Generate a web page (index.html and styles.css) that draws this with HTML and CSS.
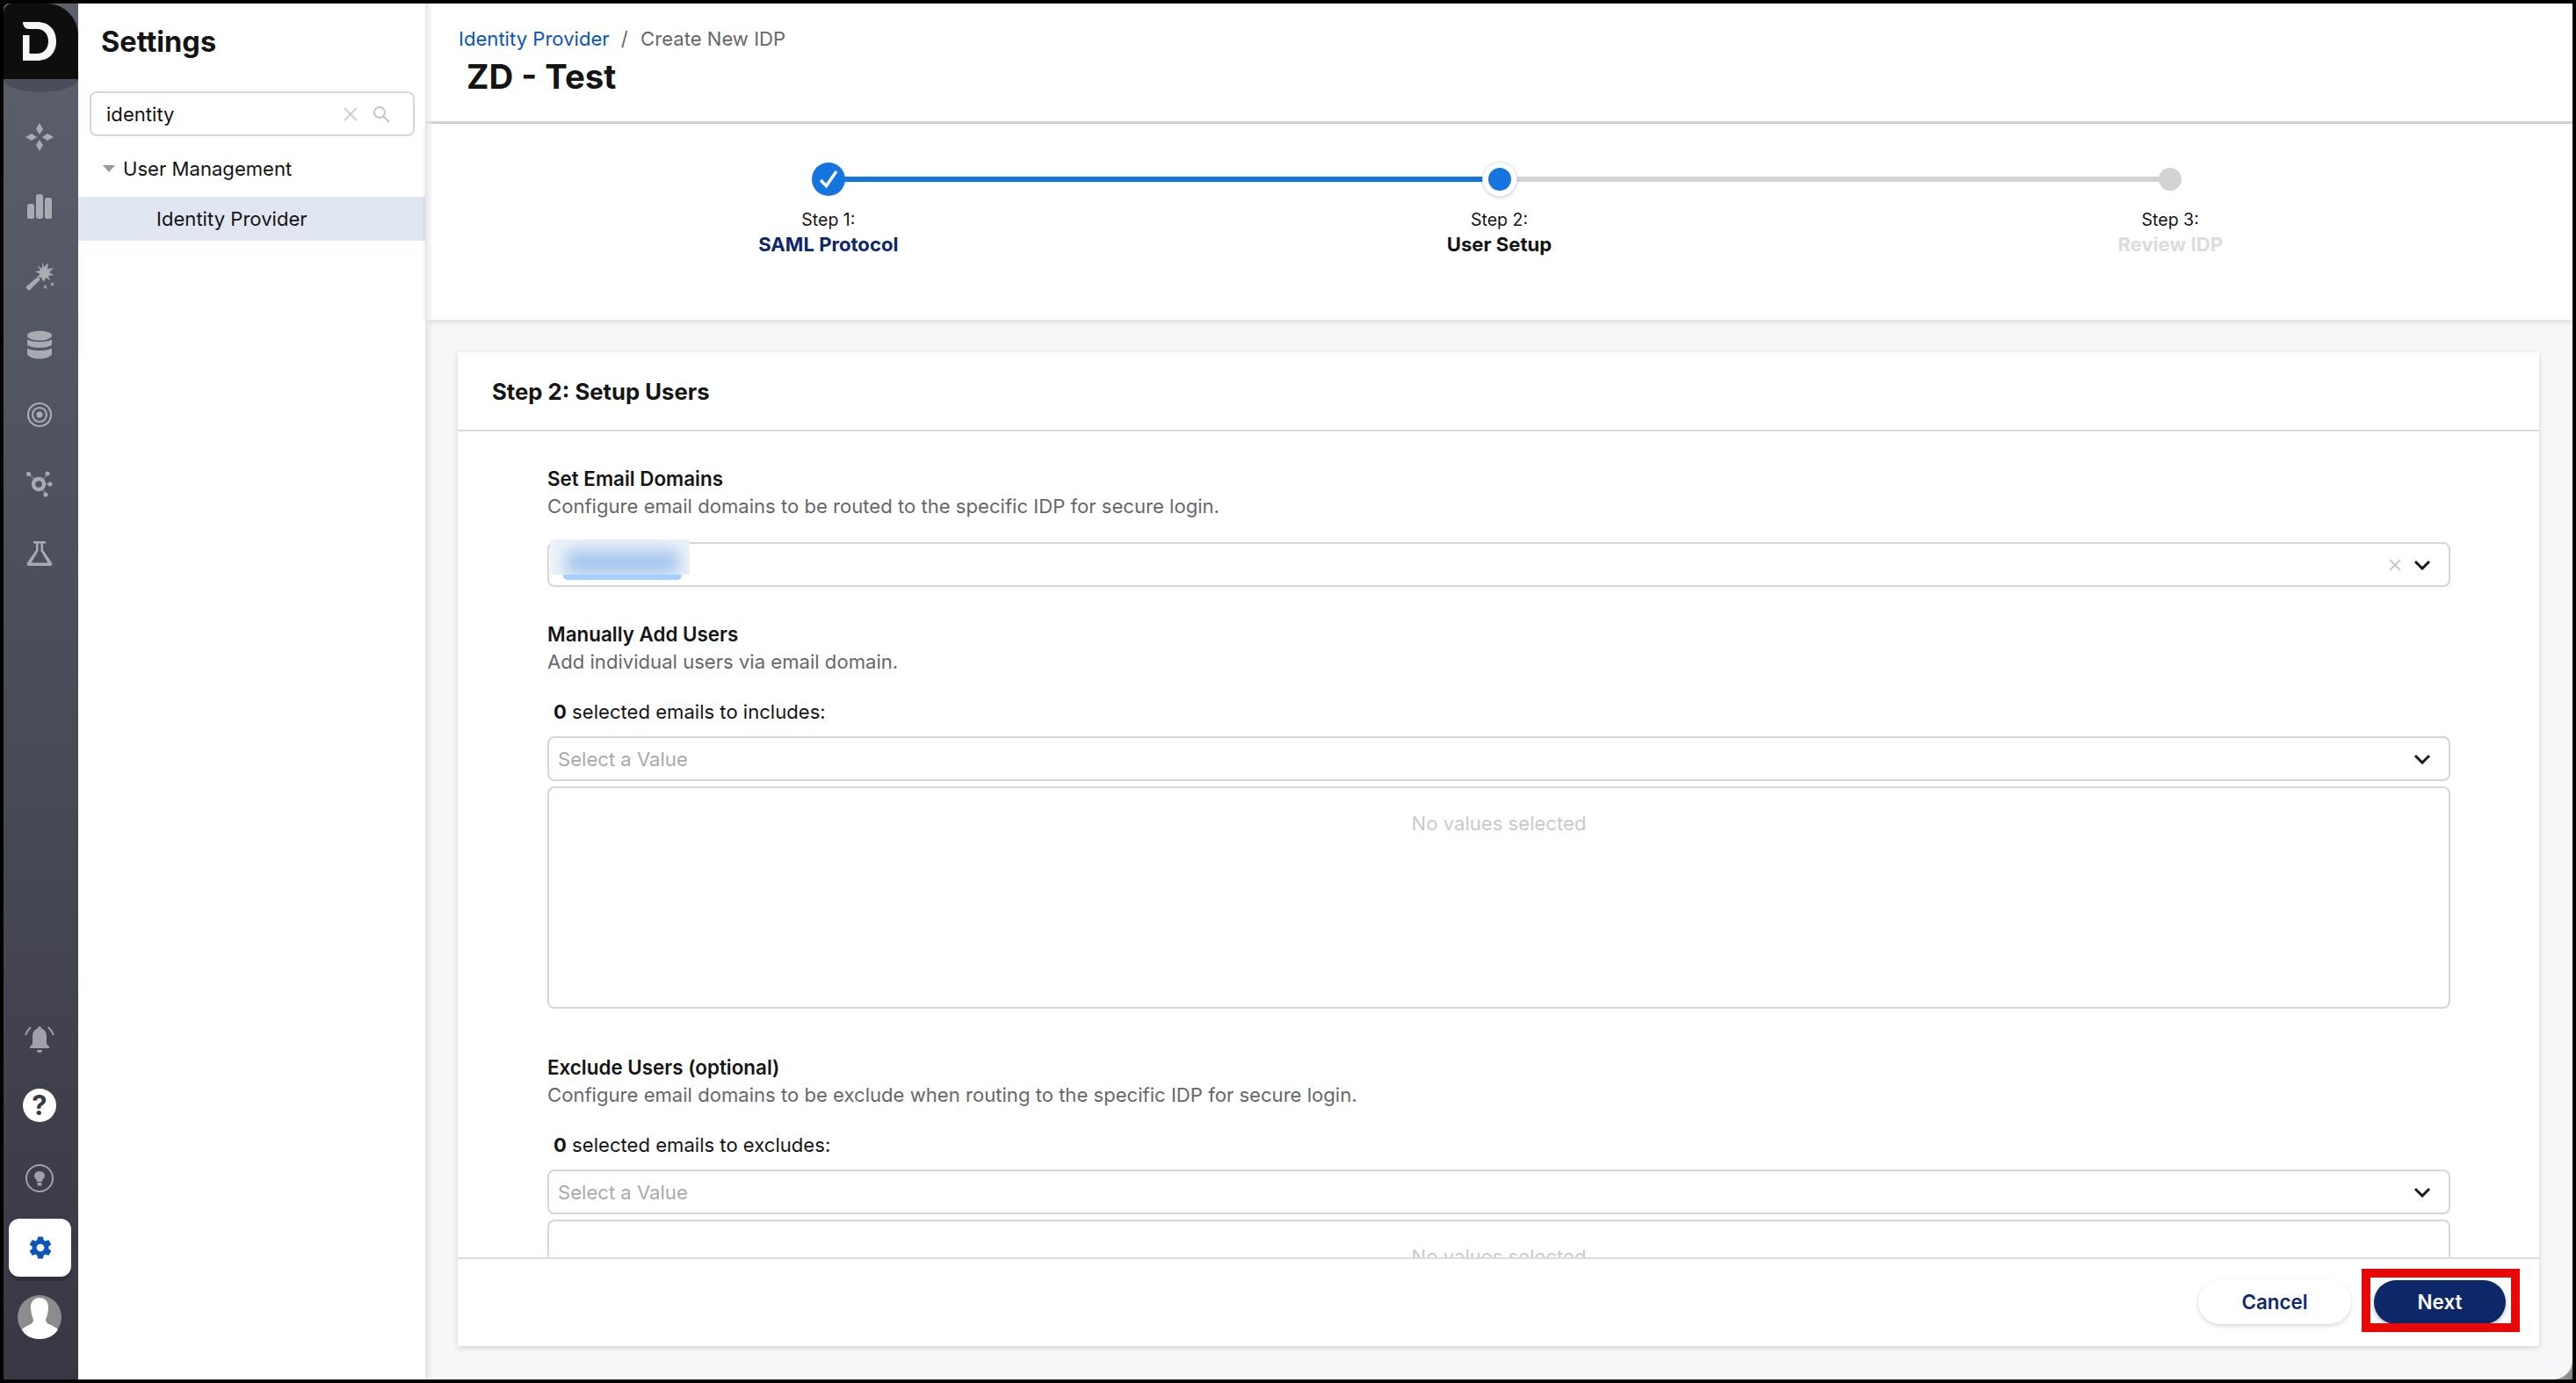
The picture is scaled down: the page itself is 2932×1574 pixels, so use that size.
FILE: index.html
```html
<!DOCTYPE html>
<html lang="en">

<head>
    <meta charset="UTF-8">
    <meta name="viewport" content="width=device-width, initial-scale=1.0">
    <title>Create New IDP</title>
    <link rel="stylesheet" href="styles.css">
</head>

<body>
    <div class="window">
        <!-- Icon rail -->
        <nav class="rail">
            <div class="rail-logo">
                <svg width="40" height="46" viewBox="0 0 40 46">
                    <path fill="#f7f8fa" fill-rule="evenodd" d="M1 1H17C31 1 39 10 39 23C39 36 31 45 17 45H1V16H8.500V37H17C25 37 30 31 30 23C30 15 25 9 17 9H8C4 9 1 6 1 1Z" />
                </svg>
            </div>
            <div class="rail-top">
                <div class="rail-item">
                    <svg width="34" height="34" viewBox="0 0 34 34" fill="#a9abb1">
                        <path d="M17 1L21 8L17 14L13 8Z" />
                        <path d="M17 33L21 26L17 20L13 26Z" />
                        <path d="M1 17L8 13L14 17L8 21Z" />
                        <path d="M33 17L26 13L20 17L26 21Z" />
                    </svg>
                </div>
                <div class="rail-item">
                    <svg width="30" height="30" viewBox="0 0 30 30" fill="#a9abb1">
                        <rect x="1" y="12" width="8" height="17" rx="2.500" />
                        <rect x="11" y="1" width="8" height="28" rx="3" />
                        <rect x="21" y="5" width="8" height="24" rx="2.500" />
                    </svg>
                </div>
                <div class="rail-item">
                    <svg width="34" height="34" viewBox="0 0 34 34" fill="#a9abb1">
                        <path d="M20 1L22 7L27 2L26 9L33 8L28 13L33 16L27 17L29 22L24 19L22 24L19 19L14 18L18 15L12 12L18 11L15 5L20 9Z" />
                        <path d="M15 18L18 21L6 33C4 34 1 31 2 29Z" />
                        <path d="M22 28l3 3m0-3l-3 3M30 25l3 3m0-3l-3 3" stroke="#a9abb1" stroke-width="1.300" />
                    </svg>
                </div>
                <div class="rail-item">
                    <svg width="30" height="34" viewBox="0 0 30 34" fill="#a9abb1">
                        <ellipse cx="15" cy="6" rx="14" ry="5.500" />
                        <path d="M1 10C4 14 26 14 29 10V16C26 21 4 21 1 16Z" />
                        <path d="M1 20C4 24 26 24 29 20V27C26 34 4 34 1 27Z" />
                    </svg>
                </div>
                <div class="rail-item">
                    <svg width="30" height="30" viewBox="0 0 30 30" fill="none" stroke="#a9abb1">
                        <circle cx="15" cy="15" r="13" stroke-width="2.200" />
                        <circle cx="15" cy="15" r="8" stroke-width="2.200" />
                        <circle cx="15" cy="15" r="3.500" fill="#a9abb1" stroke="none" />
                    </svg>
                </div>
                <div class="rail-item">
                    <svg width="32" height="30" viewBox="0 0 32 30" fill="#a9abb1">
                        <path d="M4 4L14 12M24 5L19 11M29 15L21 15M23 26L18 19" stroke="#a9abb1" stroke-width="1" />
                        <circle cx="15" cy="15" r="6" fill="none" stroke="#a9abb1" stroke-width="4.500" />
                        <circle cx="3.500" cy="3.500" r="2.500" />
                        <circle cx="25" cy="3" r="2.500" />
                        <circle cx="28" cy="15" r="2.500" />
                        <circle cx="23" cy="27" r="2.500" />
                    </svg>
                </div>
                <div class="rail-item">
                    <svg width="30" height="28" viewBox="0 0 30 28" fill="#a9abb1">
                        <path fill-rule="evenodd" d="M8 0H22V2.500H19V10L29 24.500C30 26 29 28 27 28H3C1 28 0 26 1 24.500L11 10V2.500H8ZM13.500 2.500V11L5.500 24.500H24.500L16.500 11V2.500Z" />
                    </svg>
                </div>
            </div>
            <div class="rail-bottom">
                <div class="rail-bell">
                    <svg width="34" height="34" viewBox="0 0 34 34" fill="#a0a1a8">
                        <path d="M17 2C18 2 19 3 19 4.500C23 5.500 25 9 25 14V22L28 25.500V27H6V25.500L9 22V14C9 9 11 5.500 15 4.500C15 3 16 2 17 2Z" />
                        <path d="M14 29H20C20 31 19 32 17 32C15 32 14 31 14 29Z" />
                        <path d="M7 3C4 6 2 9 1 12M27 3C30 6 32 9 33 12" fill="none" stroke="#a0a1a8" stroke-width="2" />
                    </svg>
                </div>
                <div class="rail-help">?</div>
                <div class="rail-bulb">
                    <svg width="34" height="34" viewBox="0 0 34 34" fill="#a0a1a8">
                        <circle cx="17" cy="17" r="15" fill="none" stroke="#a0a1a8" stroke-width="2" />
                        <path d="M17 9C21 9 23 12 23 14C23 17 20 18 20 21H14C14 18 11 17 11 14C11 12 13 9 17 9Z" />
                        <rect x="14.500" y="22" width="5" height="3.500" />
                    </svg>
                </div>
                <div class="rail-gear">
                    <svg width="30" height="30" viewBox="0 0 24 24" fill="#0a55b5">
                        <path d="M19.400 13c.04-.33.06-.66.06-1s-.02-.67-.07-1l2.100-1.650c.2-.15.240-.42.120-.64l-2-3.460c-.12-.22-.39-.3-.61-.22l-2.500 1c-.52-.4-1.080-.72-1.690-.98l-.38-2.650A.488.488 0 0 0 14 2h-4c-.25 0-.46.18-.49.42l-.38 2.650c-.61.25-1.170.59-1.690.98l-2.490-1c-.23-.09-.49 0-.61.22l-2 3.460c-.13.220-.07.490.120.640L4.570 11c-.04.33-.07.67-.07 1s.02.67.07 1l-2.110 1.650c-.19.150-.240.420-.120.640l2 3.460c.12.220.39.3.61.22l2.490-1c.52.4 1.080.72 1.690.98l.38 2.650c.03.24.24.42.49.42h4c.25 0 .46-.18.49-.42l.38-2.650c.61-.25 1.170-.59 1.690-.98l2.490 1c.23.09.49 0 .61-.22l2-3.460c.12-.22.07-.49-.12-.64L19.400 13zM12 15.500c-1.930 0-3.500-1.570-3.500-3.500s1.570-3.500 3.500-3.500 3.500 1.570 3.500 3.500-1.570 3.500-3.500 3.500z" />
                    </svg>
                </div>
                <div class="rail-avatar">
                    <svg width="50" height="50" viewBox="0 0 50 50">
                        <circle cx="25" cy="25" r="25" fill="#8c8c8c" />
                        <path fill="#fff" d="M25 3C31 3 35 7 35 14C35 20 33 25 32 28C32 31 34 33 38 34C42 36 45 38 46 39C42 46 34 50 25 50C16 50 8 46 5 39C7 37 10 35 13 34C16 33 18 31 18 28C17 25 15 20 15 14C15 7 19 3 25 3Z" />
                    </svg>
                </div>
            </div>
        </nav>

        <!-- Settings tree -->
        <aside class="sidebar">
            <h1 class="sidebar-title">Settings</h1>
            <div class="search">
                <span class="search-text">identity</span>
                <svg width="18" height="18" viewBox="0 0 18 18" fill="none" stroke="#c4c5c8" stroke-width="1.600">
                    <path d="M2 2L16 16M16 2L2 16" />
                </svg>
                <svg class="search-icon" width="20" height="20" viewBox="0 0 20 20" fill="none" stroke="#c4c5c8" stroke-width="2">
                    <circle cx="8" cy="8" r="6" />
                    <path d="M12.500 12.500L19 19" />
                </svg>
            </div>
            <div class="tree-parent">
                <span class="tree-caret"></span>
                User Management
            </div>
            <div class="tree-child">Identity Provider</div>
        </aside>

        <main class="main">
            <header class="page-head">
                <div class="crumbs">
                    <a href="#">Identity Provider</a>
                    <span class="crumb-sep">/</span>
                    <span>Create New IDP</span>
                </div>
                <h2 class="page-title">ZD - Test</h2>
            </header>

            <section class="stepper">
                <div class="step step-done">
                    <span class="step-dot">
                        <svg width="24" height="24" viewBox="0 0 24 24" fill="none" stroke="#fff" stroke-width="3.400">
                            <path d="M3 13L9.500 19.500L21 3" />
                        </svg>
                    </span>
                    <span class="step-num">Step 1:</span>
                    <span class="step-name">SAML Protocol</span>
                </div>
                <div class="step step-current">
                    <span class="step-dot"></span>
                    <span class="step-num">Step 2:</span>
                    <span class="step-name">User Setup</span>
                </div>
                <div class="step step-todo">
                    <span class="step-dot"></span>
                    <span class="step-num">Step 3:</span>
                    <span class="step-name">Review IDP</span>
                </div>
            </section>

            <div class="content">
                <div class="card">
                    <h3 class="card-title">Step 2: Setup Users</h3>
                    <div class="card-body">
                        <div class="field-label">Set Email Domains</div>
                        <div class="field-desc">Configure email domains to be routed to the specific IDP for secure login.</div>
                        <div class="select select-domains">
                            <span class="chip-wrap">
                                <span class="chip-bar"></span>
                                <span class="chip-blur"></span>
                            </span>
                            <svg class="select-clear" width="14" height="14" viewBox="0 0 14 14" fill="none" stroke="#b9babd" stroke-width="1.500">
                                <path d="M1 1L13 13M13 1L1 13" />
                            </svg>
                            <svg width="20" height="12" viewBox="0 0 20 12" fill="none" stroke="#1a1a1a" stroke-width="3">
                                <path d="M2 2L10 10L18 2" />
                            </svg>
                        </div>

                        <div class="field-label section-gap">Manually Add Users</div>
                        <div class="field-desc">Add individual users via email domain.</div>
                        <div class="count"><b>0</b> selected emails to includes:</div>
                        <div class="select">
                            <span class="select-ph">Select a Value</span>
                            <svg width="20" height="12" viewBox="0 0 20 12" fill="none" stroke="#1a1a1a" stroke-width="3">
                                <path d="M2 2L10 10L18 2" />
                            </svg>
                        </div>
                        <div class="values">No values selected</div>

                        <div class="field-label section-gap-lg">Exclude Users (optional)</div>
                        <div class="field-desc">Configure email domains to be exclude when routing to the specific IDP for secure login.</div>
                        <div class="count"><b>0</b> selected emails to excludes:</div>
                        <div class="select">
                            <span class="select-ph">Select a Value</span>
                            <svg width="20" height="12" viewBox="0 0 20 12" fill="none" stroke="#1a1a1a" stroke-width="3">
                                <path d="M2 2L10 10L18 2" />
                            </svg>
                        </div>
                        <div class="values">No values selected</div>
                    </div>
                    <div class="card-foot">
                        <button class="btn btn-cancel">Cancel</button>
                        <div class="next-wrap">
                            <button class="btn btn-next">Next</button>
                            <span class="next-mark"></span>
                        </div>
                    </div>
                </div>
            </div>
        </main>
        <span class="corner"></span>
    </div>
</body>

</html>
```

FILE: styles.css
```css
* {
    box-sizing: border-box;
}

html,
body {
    height: 100%;
}

body {
    margin: 0;
    font-family: Inter, "Liberation Sans", sans-serif;
    font-size: 22.1px;
    color: #141414;
    background: #000;
    overflow: hidden;
}

.window {
    position: relative;
    display: flex;
    height: 100vh;
    border: 4px solid #000;
}

/* Icon rail */
.rail {
    width: 85px;
    flex: none;
    display: flex;
    flex-direction: column;
    background: linear-gradient(#5c606d, #383844);
    border-top-left-radius: 6px;
}

.rail-logo {
    position: relative;
    height: 86px;
    display: flex;
    align-items: center;
    justify-content: center;
    padding-right: 3px;
    background: #0e0e0e;
    border-top-left-radius: 10px;
    border-top-right-radius: 36px;
}

.rail-logo::after {
    content: "";
    position: absolute;
    left: 0;
    right: 0;
    top: 86px;
    height: 15px;
    background: #4b4e5a;
    border-radius: 0 0 50% 50% / 0 0 100% 100%;
}

.rail-top {
    padding: 26px 3px 0 0;
}

.rail-item {
    height: 79px;
    display: flex;
    align-items: center;
    justify-content: center;
}

.rail-bottom {
    margin-top: auto;
    display: flex;
    flex-direction: column;
    align-items: center;
    padding: 0 3px 46px 0;
}

.rail-help {
    width: 38px;
    height: 38px;
    margin-top: 34px;
    border-radius: 50%;
    background: #fff;
    color: #3a3a48;
    font-size: 31px;
    font-weight: 700;
    line-height: 38px;
    text-align: center;
}

.rail-bulb {
    height: 34px;
    margin-top: 47px;
}

.rail-gear {
    width: 71px;
    height: 66px;
    margin-top: 29px;
    margin-left: 1px;
    display: flex;
    align-items: center;
    justify-content: center;
    background: #fff;
    border-radius: 12px;
    box-shadow: 0 5px 0 #30303b;
}

.rail-avatar {
    height: 50px;
    margin-top: 21px;
}

/* Settings tree */
.sidebar {
    width: 395px;
    flex: none;
    background: #fff;
}

.sidebar-title {
    margin: 0;
    padding: 25px 0 0 26px;
    font-size: 32.5px;
    font-weight: 700;
    line-height: 38px;
}

.search {
    height: 51px;
    margin: 37px 12px 0 13px;
    padding: 0 26px 0 17px;
    display: flex;
    align-items: center;
    gap: 16px;
    border: 2px solid #d6d6d6;
    border-radius: 8px;
}

.search-text {
    flex: 1;
}

.tree-parent {
    height: 50px;
    margin-top: 12px;
    padding-left: 28px;
    display: flex;
    align-items: center;
    gap: 9px;
}

.tree-caret {
    border-left: 7px solid transparent;
    border-right: 7px solid transparent;
    border-top: 8px solid #9a9a9a;
}

.tree-child {
    height: 50px;
    margin-top: 7px;
    padding-left: 89px;
    line-height: 50px;
    background: #e1e7f2;
}

/* Main column */
.main {
    position: relative;
    flex: 1;
    min-width: 0;
    display: flex;
    flex-direction: column;
    background: #f6f7f9;
    border-bottom-right-radius: 22px;
    z-index: 1;
}

.main::before {
    content: "";
    position: absolute;
    top: 0;
    bottom: 0;
    left: 0;
    width: 9px;
    background: linear-gradient(to right, #e4e5e6, rgba(255, 255, 255, 0));
    z-index: 2;
}

.page-head {
    height: 137px;
    flex: none;
    padding: 27px 0 0 38px;
    background: #fff;
    border-bottom: 3px solid #d3d3d3;
}

.crumbs {
    line-height: 26px;
    color: #66676b;
}

.crumbs a {
    color: #0a55b5;
    text-decoration: none;
}

.crumb-sep {
    margin: 0 8px 0 7px;
}

.page-title {
    margin: 0;
    padding: 8px 0 0 9px;
    font-size: 38.4px;
    font-weight: 700;
    line-height: 44px;
}

/* Stepper */
.stepper {
    height: 223px;
    flex: none;
    display: flex;
    padding: 44px 76px 0 77px;
    background: #fff;
    box-shadow: 0 3px 6px rgba(0, 0, 0, 0.1);
}

.step {
    position: relative;
    flex: 1;
    display: flex;
    flex-direction: column;
    align-items: center;
}

.step:not(:last-child)::after {
    content: "";
    position: absolute;
    top: 16px;
    left: 50%;
    width: 100%;
    height: 6px;
    background: #d3d3d3;
}

.step-done::after {
    background: #1475e0 !important;
}

.step-dot {
    position: relative;
    z-index: 1;
    width: 38px;
    height: 38px;
    display: flex;
    align-items: center;
    justify-content: center;
    border-radius: 50%;
}

.step-done .step-dot {
    background: #1475e0;
}

.step-current .step-dot {
    background: #1475e0;
    border: 6px solid #fff;
    box-shadow: 0 0 0 1px #d5e6fb, 0 2px 4px rgba(0, 0, 0, 0.2);
}

.step-todo .step-dot {
    margin: 6px 0;
    width: 26px;
    height: 26px;
    background: #d3d3d3;
}

.step-num {
    margin-top: 13px;
    font-size: 19.5px;
    line-height: 28px;
}

.step-name {
    font-weight: 700;
    line-height: 28px;
}

.step-done .step-name {
    color: #0d2868;
}

.step-todo .step-name {
    color: #dcdcdc;
}

/* Card */
.content {
    flex: 1;
    min-height: 0;
    display: flex;
    padding: 37px 38px 38px 37px;
}

.card {
    flex: 1;
    min-width: 0;
    display: flex;
    flex-direction: column;
    background: #fff;
    box-shadow: 0 2px 6px rgba(0, 0, 0, 0.14);
}

.card-title {
    height: 90px;
    flex: none;
    margin: 0;
    padding-left: 39px;
    font-size: 25.7px;
    font-weight: 700;
    line-height: 90px;
    border-bottom: 2px solid #dcdcdc;
}

.card-body {
    flex: 1;
    min-height: 0;
    overflow: hidden;
    padding: 38px 101px 0 102px;
}

.field-label {
    margin-bottom: 1px;
    font-size: 22.4px;
    font-weight: 600;
    line-height: 31px;
}

.field-desc {
    line-height: 30px;
    color: #66676b;
}

.section-gap {
    margin-top: 38px;
}

.section-gap-lg {
    margin-top: 51px;
}

.select {
    height: 51px;
    display: flex;
    align-items: center;
    gap: 14px;
    padding: 0 20px 0 10px;
    border: 2px solid #d6d6d6;
    border-radius: 8px;
}

.select-domains {
    margin-top: 26px;
}

.select-ph {
    flex: 1;
    color: #a9aaad;
}

.select-clear {
    margin-left: auto;
}

/* masked domain chip */
.chip-wrap {
    position: relative;
    width: 159px;
    height: 46px;
    margin: -5px 0 0 -9px;
}

.chip-bar {
    position: absolute;
    left: 15px;
    right: 9px;
    bottom: 3px;
    height: 6px;
    background: #a6cfff;
    border-radius: 0 0 5px 5px;
}

.chip-blur {
    position: absolute;
    left: 0;
    right: 0;
    top: -3px;
    height: 40px;
    overflow: hidden;
    background: #eef3fa;
}

.chip-blur::before {
    content: "";
    position: absolute;
    left: 18px;
    right: 12px;
    top: 12px;
    bottom: 0;
    background: #a4c5ec;
    filter: blur(9px);
}

.count {
    margin-top: 27px;
    margin-bottom: 13px;
    padding-left: 7px;
    line-height: 30px;
}

.count b {
    font-weight: 700;
}

.values {
    height: 253px;
    margin-top: 6px;
    padding-top: 25px;
    border: 2px solid #d6d6d6;
    border-radius: 8px;
    color: #c9cacc;
    line-height: 30px;
    text-align: center;
}

.card-foot {
    height: 101px;
    flex: none;
    display: flex;
    justify-content: flex-end;
    align-items: flex-start;
    gap: 26px;
    padding: 24px 38px 0 0;
    border-top: 2px solid #dcdcdc;
}

.btn {
    height: 50px;
    padding: 0 0 2px;
    border: none;
    border-radius: 25px;
    font-family: inherit;
    font-size: 22.4px;
    font-weight: 600;
}

.btn-cancel {
    width: 174px;
    background: #fff;
    color: #0d2868;
    box-shadow: 0 2px 5px rgba(0, 0, 0, 0.16);
}

.btn-next {
    display: block;
    width: 150px;
    background: #0d2868;
    color: #fff;
    box-shadow: 0 2px 4px rgba(0, 0, 0, 0.3);
}

.next-wrap {
    position: relative;
}

/* red annotation around the button */
.next-mark {
    position: absolute;
    left: -14px;
    right: -16px;
    top: -13px;
    bottom: -9px;
    border: 10px solid #e80808;
}

.corner {
    position: absolute;
    right: 0;
    bottom: 0;
    width: 26px;
    height: 26px;
    background: linear-gradient(135deg, #d5d9d2, #7c8279);
}
```
